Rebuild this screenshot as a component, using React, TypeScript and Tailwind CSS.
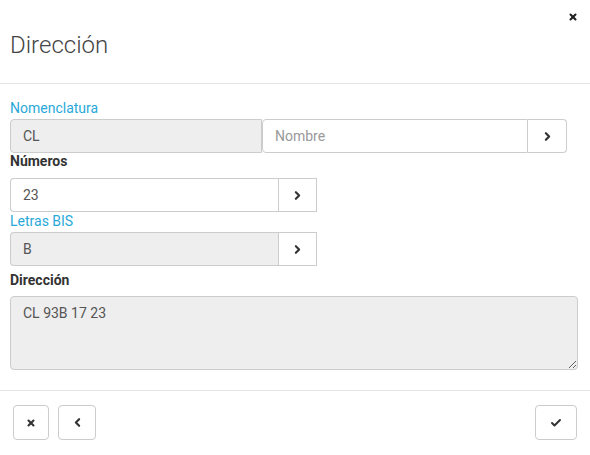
import { ChevronRight, ChevronLeft, X, Check } from 'lucide-react'

function Arrow() {
  return (
    <button className="flex h-[34px] w-[39px] shrink-0 items-center justify-center border border-[#ccc] bg-white text-[#333]">
      <ChevronRight className="h-[13px] w-[13px]" strokeWidth={4} />
    </button>
  )
}

export default function App() {
  return (
    <div className="h-[455px] w-[590px] bg-white font-['Roboto',sans-serif] text-[14px] text-[#555]">
      {/* Header */}
      <div className="relative h-[84px] border-b border-[#e5e5e5]">
        <span className="absolute right-[12px] top-[12px] text-[#222]">
          <X className="h-[10px] w-[10px]" strokeWidth={5} />
        </span>
        <h1 className="pl-[10px] pt-[29px] text-[24px] font-light leading-[32px] text-[#444]">Dirección</h1>
      </div>

      {/* Body */}
      <div className="pl-[10px] pr-[12px] pt-[16px]">
        <div className="h-[19px] leading-[16px] text-[#29a9d9]">Nomenclatura</div>
        <div className="flex h-[34px] w-[557px]">
          <div className="flex w-[252px] items-center rounded-l-[4px] border border-[#ccc] bg-[#eee] px-[12px]">CL</div>
          <div className="flex flex-1 items-center rounded-l-[4px] border border-[#ccc] px-[12px] text-[#999]">Nombre</div>
          <button className="flex h-[34px] w-[39px] items-center justify-center rounded-r-[4px] border-y border-r border-[#ccc] bg-white text-[#333]">
            <ChevronRight className="h-[13px] w-[13px]" strokeWidth={4} />
          </button>
        </div>

        <div className="h-[25px] pt-[1px] font-bold leading-[15px] text-[#333]">Números</div>
        <div className="flex h-[34px] w-[307px]">
          <div className="flex flex-1 items-center rounded-l-[4px] border-y border-l border-[#ccc] bg-white px-[12px]">23</div>
          <Arrow />
        </div>

        <div className="h-[20px] pt-[2px] leading-[15px] text-[#29a9d9]">Letras BIS</div>
        <div className="flex h-[34px] w-[307px]">
          <div className="flex flex-1 items-center rounded-l-[4px] border-y border-l border-[#ccc] bg-[#eee] px-[12px]">B</div>
          <Arrow />
        </div>

        <div className="h-[30px] pt-[7px] font-bold leading-[15px] text-[#333]">Dirección</div>
        <textarea
          readOnly
          value="CL 93B 17 23"
          className="block h-[74px] w-[568px] rounded-[4px] border border-[#ccc] bg-[#eee] px-[12px] py-[6px] text-[14px] text-[#555] outline-none"
        />
      </div>

      {/* Footer */}
      <div className="mt-[20px] flex items-center justify-between border-t border-[#e5e5e5] pl-[13px] pr-[13px] pt-[14px]">
        <div className="flex gap-[9px]">
          <button className="flex h-[35px] w-[36px] items-center justify-center rounded-[4px] border border-[#ccc] bg-white text-[#333]">
            <X className="h-[10px] w-[10px]" strokeWidth={5} />
          </button>
          <button className="flex h-[35px] w-[38px] items-center justify-center rounded-[4px] border border-[#ccc] bg-white text-[#333]">
            <ChevronLeft className="h-[13px] w-[13px]" strokeWidth={4} />
          </button>
        </div>
        <button className="flex h-[35px] w-[42px] items-center justify-center rounded-[4px] border border-[#ccc] bg-white text-[#333]">
          <Check className="h-[12px] w-[12px]" strokeWidth={4} />
        </button>
      </div>
    </div>
  )
}
